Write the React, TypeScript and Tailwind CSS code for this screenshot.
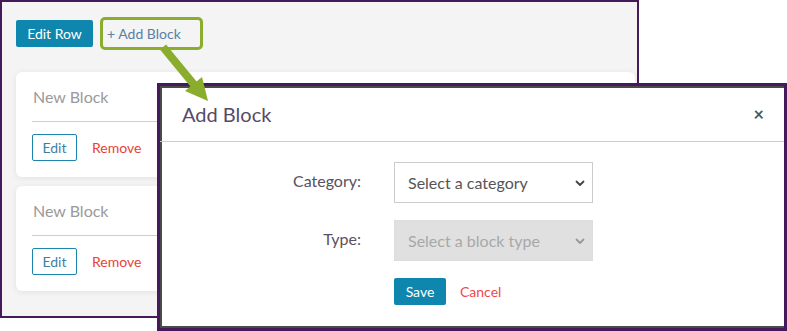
import React from 'react';

const font = { fontFamily: 'Lato, "Noto Sans", sans-serif' };

const Chevron: React.FC<{ color: string }> = ({ color }) => (
  <svg width="10" height="10" viewBox="0 0 10 10" className="pointer-events-none absolute right-[8px] top-1/2 -translate-y-1/2">
    <path d="M1.5 3.5 L5 7 L8.5 3.5" fill="none" stroke={color} strokeWidth="1.8" strokeLinecap="round" strokeLinejoin="round" />
  </svg>
);

const BlockCard: React.FC = () => (
  <div className="w-[619px] rounded-[6px] bg-white px-[16px] pt-[14px] pb-[16px] shadow-[0_1px_6px_rgba(0,0,0,0.08)]">
    <div className="h-[22px] pl-[1px] text-[16px] leading-[22px] text-[#9a9a9a]">New Block</div>
    <div className="mt-[13px] h-px bg-[#cfcfcf]"></div>
    <div className="mt-[12px] flex items-center gap-[15px]">
      <button className="h-[27px] w-[45px] rounded-[2px] border border-[#1a86ad] text-[14px] text-[#3d7fa5]">Edit</button>
      <button className="text-[14px] text-[#e8413a]">Remove</button>
    </div>
  </div>
);

export default function App() {
  return (
    <div className="relative h-[331px] w-[787px] overflow-hidden bg-white" style={font}>
      {/* page behind the dialog */}
      <div className="h-[318px] w-[639px] border-2 border-[#45195a] bg-[#f4f4f4] pl-[14px] pt-[15px]">
        <div className="flex items-center">
          <button className="h-[27px] w-[77px] rounded-[2px] bg-[#0f86ad] text-[14px] text-white">Edit Row</button>
          <div className="ml-[7px] flex h-[33px] w-[103px] items-center rounded-[5px] border-[3px] border-[#8aad2d] pl-[4px]">
            <button className="text-[14px] text-[#5a80a3]">+ Add Block</button>
          </div>
        </div>
        <div className="mt-[22px] flex flex-col gap-[9px]">
          <BlockCard />
          <BlockCard />
        </div>
      </div>

      {/* dialog */}
      <div className="absolute left-[157px] top-[83px] h-[248px] w-[630px] border-[3px] border-[#45195a] bg-white shadow-[inset_2px_2px_0_#4a4a4a,inset_0_-2px_0_#4a4a4a]">
        <div className="flex h-[56px] items-center justify-between border-b border-[#cccccc] pl-[22px] pr-[20px]">
          <h2 className="text-[20px] text-[#574a66]">Add Block</h2>
          <button className="text-[18px] font-bold leading-none text-[#555]">×</button>
        </div>
        <div className="grid grid-cols-[201px_199px] gap-x-[33px] gap-y-[17px] pt-[20px]">
          <label className="pt-[7px] text-right text-[16px] text-[#5a5060]">Category:</label>
          <div className="relative">
            <select className="h-[41px] w-full appearance-none border border-[#cccccc] bg-white pl-[13px] text-[16px] text-[#555]">
              <option>Select a category</option>
            </select>
            <Chevron color="#444" />
          </div>
          <label className="pt-[7px] text-right text-[16px] text-[#5a5060]">Type:</label>
          <div className="relative">
            <select disabled className="h-[41px] w-full appearance-none border border-[#dddddd] bg-[#e0e0e0] pl-[13px] text-[16px] text-[#a8a8a8]">
              <option>Select a block type</option>
            </select>
            <Chevron color="#999" />
          </div>
          <div className="col-start-2 flex items-center gap-[14px]">
            <button className="h-[27px] w-[52px] rounded-[2px] bg-[#0f86ad] text-[14px] text-white">Save</button>
            <button className="text-[14px] text-[#f0474f]">Cancel</button>
          </div>
        </div>
      </div>

      {/* callout arrow */}
      <svg className="pointer-events-none absolute left-0 top-0" width="787" height="331">
        <line x1="163" y1="47" x2="196" y2="87" stroke="#8aad2d" strokeWidth="8" />
        <polygon points="208,101 202,77 185,91" fill="#8aad2d" />
      </svg>
    </div>
  );
}
